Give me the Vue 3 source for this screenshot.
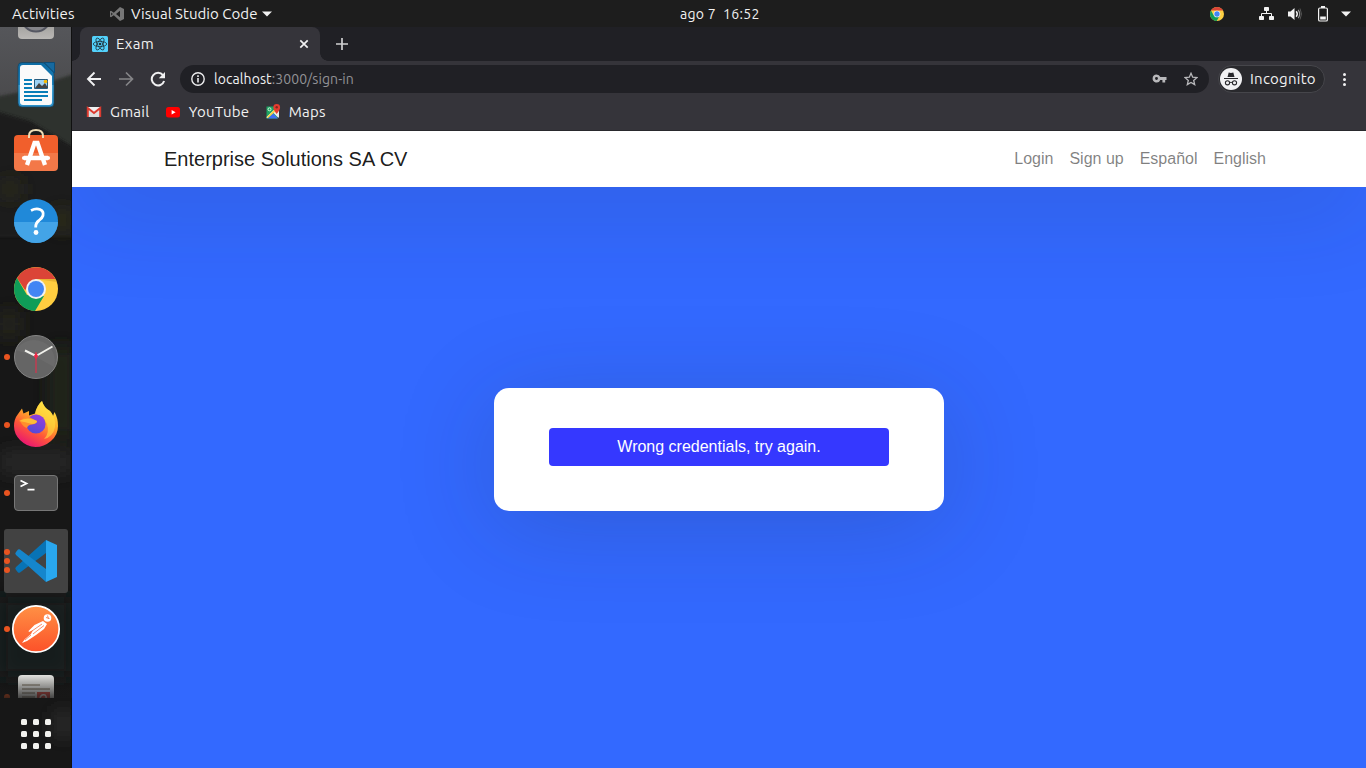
<script setup>
const bookmarks = ['Gmail', 'YouTube', 'Maps']
const links = ['Login', 'Sign up', 'Español', 'English']
const rays = [0, 60, 120]
</script>

<template>
  <div class="desktop">
    <header class="topbar">
      <div class="tb-left">
        <span class="activities">Activities</span>
        <svg class="vs-mini" width="16" height="16" viewBox="0 0 16 16"><path d="M11 1l4 2v10l-4 2-6.200-5.800L2 11.300 1 10.700V5.300l1-.6 2.800 2.100zM11 4.800L7 8l4 3.200zM2.200 6.400v3.200L3.800 8z" fill="#777" fill-rule="evenodd" /></svg>
        <span class="app-name">Visual Studio Code</span>
        <svg class="caret" width="10" height="6" viewBox="0 0 10 6"><path d="M0 .5h10L5 5.500z" fill="#f2f2f2" /></svg>
      </div>
      <span class="clock">ago 7&nbsp; 16:52</span>
      <div class="tray">
        <svg class="tray-chrome" width="14" height="14" viewBox="0 0 44 44"><circle cx="22" cy="22" r="22" fill="#fdd043" /><path d="M3 11A22 22 0 0 1 41 11H22z" fill="#db4437" /><path d="M3 11A22 22 0 0 0 21 44L31 27 12 27z" fill="#0f9d58" /><circle cx="22" cy="22" r="10.500" fill="#fff" /><circle cx="22" cy="22" r="8.500" fill="#4285f4" /></svg>
        <svg class="tray-net" width="16" height="14" viewBox="0 0 16 14" fill="#f2f2f2"><rect x="5" y="0" width="5" height="4" rx=".8" /><rect x="0" y="9" width="5" height="4" rx=".8" /><rect x="10" y="9" width="5" height="4" rx=".8" /><path d="M7.500 3v3.500M2.500 10V6.500h10V10" fill="none" stroke="#f2f2f2" /></svg>
        <svg class="tray-vol" width="16" height="14" viewBox="0 0 16 14"><path d="M1 4.500h2.500L7.500 1v12L3.500 9.500H1z" fill="#f2f2f2" /><path d="M9.200 4.300q2.200 2.700 0 5.400" fill="none" stroke="#f2f2f2" stroke-width="1.400" /><path d="M11.200 2.800q3 4.200 0 8.400" fill="none" stroke="#999" stroke-width="1.200" /><path d="M13 1.500q3 5.500 0 11" fill="none" stroke="#555" /></svg>
        <svg class="tray-bat" width="10" height="16" viewBox="0 0 10 16"><rect x=".6" y="2" width="8.800" height="13" rx="1.300" fill="none" stroke="#f2f2f2" stroke-width="1.200" /><rect x="3" y="0" width="4" height="2" fill="#f2f2f2" /><rect x="2.200" y="10.500" width="5.600" height="3" fill="#f2f2f2" /></svg>
        <svg width="10" height="6" viewBox="0 0 10 6"><path d="M0 .5h10L5 5.500z" fill="#f2f2f2" /></svg>
      </div>
    </header>

    <div class="workspace">
      <aside class="dock">
        <svg class="wall" width="72" height="741" viewBox="0 0 72 741" preserveAspectRatio="none">
          <defs>
            <linearGradient id="sky" x1="0" y1="0" x2="0" y2="1"><stop offset="0" stop-color="#55565a" /><stop offset="1" stop-color="#4a4a4c" /></linearGradient>
            <filter id="soft" x="-20%" y="-20%" width="140%" height="140%"><feGaussianBlur stdDeviation="1.500" /></filter>
            <filter id="haze" x="-50%" y="-50%" width="200%" height="200%"><feGaussianBlur stdDeviation="9" /></filter>
          </defs>
          <rect width="72" height="741" fill="#171717" />
          <rect width="72" height="75" fill="url(#sky)" />
          <path d="M-5 70L35 62 55 53 77 46V200H-5z" fill="#2f322e" filter="url(#soft)" />
          <path d="M-5 84L30 94 77 122V210H-5z" fill="#1a1a1a" filter="url(#soft)" />
          <g filter="url(#haze)"><rect x="0" y="155" width="20" height="14" fill="#30301d" /><rect x="52" y="184" width="20" height="18" fill="#32321b" /><rect x="0" y="285" width="18" height="24" fill="#292b1b" /><rect x="50" y="320" width="22" height="90" fill="#22251c" /><rect x="0" y="425" width="72" height="20" fill="#2b2b2b" /><rect x="0" y="570" width="72" height="80" fill="#191b1d" /><rect x="55" y="685" width="17" height="24" fill="#303032" /></g>
          <rect x="71" width="1" height="741" fill="#101010" />
        </svg>

        <div class="apps">
          <div class="app"><svg width="64" height="64"><defs><linearGradient id="metal" x1="0" y1="0" x2="0" y2="1"><stop offset="0" stop-color="#777" /><stop offset="1" stop-color="#bab8b5" /></linearGradient></defs><rect x="14" y="14" width="36" height="40" rx="4" fill="url(#metal)" /><circle cx="32" cy="32" r="14.500" fill="#85858a" stroke="#555762" stroke-width="2" /></svg></div>

          <div class="app"><svg width="64" height="64">
            <defs><linearGradient id="writer" x1="0" y1="0" x2="0" y2="1"><stop offset="0" stop-color="#0d6ba3" /><stop offset=".5" stop-color="#1b82bd" /><stop offset=".51" stop-color="#41a3d6" /><stop offset="1" stop-color="#2a8fc8" /></linearGradient></defs>
            <path d="M18 9.500h20q2 0 3.500 1.500l7 7Q50 19 50 21v29q0 4-4 4H18q-4 0-4-4V13.500q0-4 4-4z" fill="url(#writer)" stroke="#17405a" stroke-width=".7" />
            <path d="M19 12h18L48 23v26q0 3-3 3H19q-3 0-3-3V15q0-3 3-3z" fill="#fafafa" />
            <path d="M40 9.500h10.500V20z" fill="#16699f" stroke="#0d4d78" />
            <path d="M20 27h8M20 31h8M20 35h8M20 39h24M20 43h24M20 47h18" stroke="#087eb8" stroke-width="2" />
            <path d="M30.500 26.500h13v9h-13z" fill="#9dd2f4" stroke="#265c80" /><path d="M31 35l4-5 3 3 3-3 3 5z" fill="#444" /><circle cx="41.500" cy="28.500" r="1.800" fill="#f7b900" />
          </svg></div>

          <div class="app"><svg width="64" height="64">
            <path d="M14 14h36q4 0 4 4v15H10V18q0-4 4-4z" fill="#f15f2c" /><path d="M10 32h44v14q0 4-4 4H14q-4 0-4-4z" fill="#f37848" />
            <path d="M25 17v-2q0-6 7-6t7 6v2" fill="none" stroke="#efdcb5" stroke-width="2" />
            <path d="M23 44L30.500 22h3L41 44M20 37h24" fill="none" stroke="#fff" stroke-width="4.300" /><circle cx="20" cy="37" r="2.100" fill="#fff" /><circle cx="44" cy="37" r="2.100" fill="#fff" />
          </svg></div>

          <div class="app"><svg width="64" height="64">
            <circle cx="32" cy="32" r="22" fill="#2089d9" /><path d="M10 33a22 21 0 0 0 44 0z" fill="#43a4e7" />
            <path d="M27 21.500q5-2.500 9-1 4 1.800 3 6-.7 2.500-4 5-3.500 2.500-3.300 7" fill="none" stroke="#fff" stroke-width="2.800" /><circle cx="32" cy="43.500" r="2.400" fill="#fff" />
          </svg></div>

          <div class="app"><svg width="64" height="64">
            <circle cx="32" cy="32" r="22" fill="#ffcd40" /><path d="M13 21A22 22 0 0 1 51.500 22H32L21 33z" fill="#db4437" /><path d="M13 21A22 22 0 0 0 31 54L40 39 23 38z" fill="#0f9d58" /><path d="M32 22h19.500l1 3z" fill="#d9a32a" opacity=".6" /><circle cx="32" cy="32" r="10" fill="#f1f1f1" /><circle cx="32" cy="32" r="8" fill="#4285f4" />
          </svg></div>

          <div class="app"><i class="dot"></i><svg width="64" height="64">
            <circle cx="32" cy="32" r="21.500" fill="#656565" stroke="#858585" /><path d="M32 32L50 42A21 21 0 0 0 12 25z" fill="#6b6b6b" />
            <path d="M32 31L21 25.500M32 31l16.500-9.500" stroke="#f1f1ec" stroke-width="2" /><path d="M32 27v21" stroke="#ef2949" stroke-width="1" /><path d="M32 28l2.200 3-2.200 3.500-2.200-3.500z" fill="#ef2949" />
          </svg></div>

          <div class="app"><i class="dot"></i><svg width="64" height="64">
            <defs><linearGradient id="fox" x1=".8" y1="0" x2=".25" y2="1"><stop offset="0" stop-color="#fff04a" /><stop offset=".38" stop-color="#ffad28" /><stop offset=".65" stop-color="#ff5838" /><stop offset="1" stop-color="#e60e78" /></linearGradient><linearGradient id="globe" x1=".8" y1="0" x2=".3" y2="1"><stop offset="0" stop-color="#9a3ddd" /><stop offset="1" stop-color="#514bd6" /></linearGradient></defs>
            <path d="M14 21L18 15.500l1.500 5 5.500-2.500v4.500l6-2Q33 12 38 8q2 7 8 10 2 2 3 5l1.500-4Q54 25 54 33q0 9-7 15-7 6-15.500 6T16 47Q10 41 10 33q0-7 4-12z" fill="url(#fox)" />
            <path d="M31 20.500Q33 12 38 8q2 7 8 10 6 7 5 16-2 10-11 12 6-6 3-15-4-9-12-10.500z" fill="#ffe042" opacity=".6" />
            <circle cx="32" cy="31" r="9.600" fill="url(#globe)" />
            <path d="M16 28q3-4 9-4l8 4q0 2.500-5 3.500-4 0-5 3.500-4-1-7-7z" fill="#ff8f2d" />
            <path d="M15 28q9-5 18 0 0 2.500-5 3-7-2-13-3z" fill="#ffbd38" />
          </svg></div>

          <div class="app"><i class="dot"></i><svg width="64" height="64">
            <rect x="10.500" y="14.500" width="43" height="35" rx="3.500" fill="#4d4d4d" stroke="#777" /><path d="M16.500 19.500l6 3-6 3M23.500 28.700h7" fill="none" stroke="#fff" stroke-width="1.800" />
          </svg></div>

          <div class="app active"><div class="dots"><i></i><i></i><i></i></div><svg width="64" height="64">
            <path d="M12 41q-1.500-1.500 0-3L42 11v13L16 43.500q-1 .5-2 0z" fill="#0873b5" /><path d="M12 23q-1.500 1.500 0 3l30 27V40L16 20.500q-1-.5-2 0z" fill="#1586cc" /><path d="M42 11l11 5v32l-11 5z" fill="#29a7ee" />
          </svg></div>

          <div class="app"><i class="dot"></i><svg width="64" height="64">
            <defs><linearGradient id="post" x1="0" y1="0" x2="0" y2="1"><stop offset="0" stop-color="#ff9145" /><stop offset="1" stop-color="#fc5129" /></linearGradient></defs>
            <circle cx="32" cy="32" r="23.200" fill="url(#post)" stroke="#fff" stroke-width="1.700" />
            <circle cx="43.500" cy="21" r="3.800" fill="#fff" /><path d="M42 20.500l3.500 1M43.500 18.500l1 3.500" fill="none" stroke="#fa7440" stroke-width=".8" />
            <path d="M39 24l4 3-3 5-8 6-9 6-5 2 3-4 6-5 2-4-4 2-.5-1 6-6z" fill="#fff" /><path d="M38 27l-10 7M40 28.500L29 37M27 38l-6 5" stroke="#fa7044" stroke-width=".8" />
          </svg></div>

          <div class="app"><i class="dot"></i><svg width="64" height="64">
            <rect x="14" y="10" width="36" height="44" rx="4" fill="#e8e8e5" /><path d="M18 20h18M18 24h28M18 28h13M18 32h13" stroke="#999184" stroke-width="1.700" /><rect x="33" y="27" width="13" height="15" fill="#d94f48" /><path d="M36 33q1-4 5-3 3 3-1 4" fill="none" stroke="#eee" stroke-width="1.500" />
          </svg></div>
          <div class="fade"></div>
        </div>
        <div class="grid-btn"><i v-for="n in 9" :key="n"></i></div>
      </aside>

      <main class="browser">
        <div class="tabstrip">
          <div class="tab">
            <svg width="16" height="16" viewBox="0 0 16 16"><rect width="16" height="16" rx="1.500" fill="#53d1fb" /><g fill="none" stroke="#20343e" stroke-width=".8"><ellipse v-for="a in rays" :key="a" cx="8" cy="8" rx="6.700" ry="2.600" :transform="`rotate(${a} 8 8)`" /></g><circle cx="8" cy="8" r="1.300" fill="#20343e" /></svg>
            <span class="tab-title">Exam</span>
            <svg width="10" height="10" viewBox="0 0 10 10"><path d="M1.300 1.300l7.400 7.400M8.700 1.300L1.300 8.700" stroke="#f1f1f2" stroke-width="1.700" /></svg>
          </div>
          <svg class="plus" width="12" height="12" viewBox="0 0 12 12"><path d="M6 0v12M0 6h12" stroke="#cfcfd1" stroke-width="1.700" /></svg>
        </div>

        <div class="toolbar">
          <svg class="nav-i" width="16" height="16" viewBox="0 0 16 16"><path d="M15 8H2.500M8.500 1.500L2 8l6.500 6.500" fill="none" stroke="#f1f1f2" stroke-width="1.900" /></svg>
          <svg class="nav-i" width="16" height="16" viewBox="0 0 16 16"><path d="M1 8h13M8 1.500L14.500 8 8 14.500" fill="none" stroke="#858588" stroke-width="1.700" /></svg>
          <svg class="nav-i" width="16" height="16" viewBox="0 0 16 16"><path d="M13 4.200A6.300 6.300 0 1 0 14.100 10" fill="none" stroke="#f1f1f2" stroke-width="2" /><path d="M15 1v6.200H8.800z" fill="#f1f1f2" /></svg>
          <div class="omnibox">
            <svg width="14" height="14" viewBox="0 0 14 14"><circle cx="7" cy="7" r="6.200" fill="none" stroke="#ececee" stroke-width="1.400" /><path d="M7 6v4.500M7 3.300v1.600" stroke="#ececee" stroke-width="1.600" /></svg>
            <span class="url">localhost<span>:3000/sign-in</span></span>
            <svg class="key" width="15" height="10" viewBox="0 0 15 10"><path d="M4.500 .5a4 4 0 0 1 3.800 2.600H14.500v2.900h-1.300V8.500h-2.800V6H8.300a4 4 0 1 1-3.800-5.500zm0 2.600a1.400 1.400 0 1 0 0 2.900 1.400 1.400 0 0 0 0-2.900z" fill="#b8b8bb" fill-rule="evenodd" /></svg>
            <svg class="star" width="14" height="14" viewBox="0 0 14 14"><path d="M7 1.300l1.700 3.900 4.300.4-3.300 2.800 1 4.200L7 10.400l-3.700 2.200 1-4.200L1 5.600l4.300-.4z" fill="none" stroke="#b8b8bb" stroke-width="1.300" /></svg>
          </div>
          <div class="incognito">
            <svg width="22" height="22" viewBox="0 0 22 22"><circle cx="11" cy="11" r="11" fill="#f1f1f3" /><path d="M7.500 9l1.200-4.500q2.300.8 4.600 0L14.500 9zM4 10h14v1H4z" fill="#28282c" /><g fill="none" stroke="#28282c" stroke-width="1.100"><circle cx="7.500" cy="14.800" r="2.100" /><circle cx="14.500" cy="14.800" r="2.100" /><path d="M9.700 14.600q1.300-.8 2.600 0" /></g></svg>
            <span>Incognito</span>
          </div>
          <div class="kebab"><i></i><i></i><i></i></div>
        </div>

        <div class="bookmarks">
          <div v-for="b in bookmarks" :key="b" class="bookmark">
            <svg v-if="b === 'Gmail'" width="16" height="16" viewBox="0 0 16 16"><path d="M1 3h14v10H1z" fill="#f0f0f0" /><path d="M3 5l5 4 5-4v8H3z" fill="#dedede" /><path d="M1.800 13V4L8 9l6.200-5v9" fill="none" stroke="#dc3b30" stroke-width="2" /></svg>
            <svg v-else-if="b === 'YouTube'" width="16" height="16" viewBox="0 0 16 16"><rect x="1" y="3" width="14" height="10.500" rx="2.500" fill="#f00" /><path d="M6.600 6l4 2.200-4 2.300z" fill="#fff" /></svg>
            <svg v-else width="16" height="16" viewBox="0 0 16 16"><path d="M1.500 2.500h11v12h-11z" fill="#1da462" /><path d="M1.500 13L12 3l2 1v9.500h-1L8 8.500l-6 6z" fill="#e9e9e9" /><path d="M3 14.500l5-5.200 5 5.200z" fill="#3f6ff2" /><path d="M2 13L10 5l1.200 1.700L3 14z" fill="#fdd042" /><circle cx="4.500" cy="5.300" r="1.500" fill="none" stroke="#d7f4df" /><path d="M11.700 0a3.400 3.400 0 0 1 3.400 3.400q0 2-3.400 6.600-3.400-4.600-3.400-6.600A3.400 3.400 0 0 1 11.700 0z" fill="#e63c2f" /><circle cx="11.700" cy="3.300" r="1.200" fill="#80281f" /></svg>
            <span>{{ b }}</span>
          </div>
        </div>

        <div class="page">
          <nav class="navbar">
            <span class="brand">Enterprise Solutions SA CV</span>
            <div class="links"><a v-for="l in links" :key="l">{{ l }}</a></div>
          </nav>
          <section class="content">
            <div class="card"><div class="alert">Wrong credentials, try again.</div></div>
          </section>
        </div>
      </main>
    </div>
  </div>
</template>

<style>
html, body { margin: 0; overflow: hidden; }
</style>

<style scoped>
* { box-sizing: border-box; }
svg { display: block; flex: none; }
.desktop { width: 1366px; height: 768px; display: flex; flex-direction: column; overflow: hidden; font: 15px/20px Ubuntu, "Noto Sans", sans-serif; color: #f1f1f1; white-space: nowrap; }
.topbar { height: 27px; flex: none; background: #1d1d1d; display: grid; grid-template-columns: 607px 152px 1fr; align-items: center; }
.tb-left { display: flex; align-items: center; padding-left: 12px; }
.activities { width: 97px; letter-spacing: .1px; }
.vs-mini { margin-right: 6px; }
.app-name { width: 127px; letter-spacing: .04px; }
.caret { margin-left: 4px; }
.clock { width: 80px; font-size: 14px; letter-spacing: .3px; margin-left: 73px; }
.tray { display: flex; align-items: center; justify-content: flex-end; padding-right: 15px; }
.tray-chrome { margin-right: 35px; }
.tray-net { margin-right: 12px; }
.tray-vol { margin-right: 15px; }
.tray-bat { margin-right: 13px; }
.workspace { display: flex; height: 741px; }

.dock { width: 72px; flex: none; position: relative; background: #171717; overflow: hidden; }
.wall { position: absolute; inset: 0; }
.apps { position: relative; height: 671px; overflow: hidden; display: flex; flex-direction: column; gap: 4px; padding: 0 4px; }
.app { position: relative; width: 64px; height: 64px; flex: none; border-radius: 3px; }
.app:first-child { margin-top: -42px; }
.active { background: #424242; }
.dot, .dots i { width: 6px; height: 6px; border-radius: 50%; background: #e95420; }
.dot { position: absolute; left: 0; top: 29px; }
.dots { position: absolute; left: 0; top: 20px; display: flex; flex-direction: column; gap: 3px; }
.fade { position: absolute; left: 0; right: 0; bottom: 0; height: 24px; background: linear-gradient(rgba(23,23,23,0), rgba(23,23,23,.78)); }
.grid-btn { position: relative; width: 30px; margin: 21px auto 0; display: grid; grid-template-columns: repeat(3, 6px); gap: 6px; }
.grid-btn i { width: 6px; height: 6px; border-radius: 1.5px; background: #f1f1ee; }

.browser { flex: 1; display: flex; flex-direction: column; background: #35343a; }
.tabstrip { height: 34px; flex: none; background: #202025; display: flex; align-items: center; padding-left: 8px; }
.tab { position: relative; width: 240px; height: 34px; border-radius: 8px 8px 0 0; background: #35343a; display: flex; align-items: center; padding: 0 11px 0 12px; }
.tab::before, .tab::after { content: ""; position: absolute; bottom: 0; width: 8px; height: 8px; }
.tab::before { left: -8px; background: radial-gradient(circle at 0 0, #202025 7.5px, #35343a 8px); }
.tab::after { right: -8px; background: radial-gradient(circle at 100% 0, #202025 7.5px, #35343a 8px); }
.tab-title { flex: 1; margin-left: 8px; letter-spacing: .3px; }
.plus { margin-left: 16px; }
.toolbar { height: 36px; flex: none; display: flex; align-items: center; padding-left: 14px; }
.nav-i { margin-right: 16px; }
.omnibox { width: 1029px; height: 28px; margin-left: -2px; border-radius: 14px; background: #202025; display: flex; align-items: center; padding: 0 11px; }
.url { flex: 1; margin-left: 9px; font-size: 14px; letter-spacing: .08px; color: #f1f1f2; }
.url span { color: #929296; }
.key { margin-right: 17px; }
.incognito { width: 107px; height: 28px; margin-left: 9px; border: 1px solid #46464b; border-radius: 14px; background: #29292d; display: flex; align-items: center; padding-left: 1px; }
.incognito span { margin-left: 8px; letter-spacing: .25px; }
.kebab { margin-left: 18px; display: flex; flex-direction: column; gap: 2px; }
.kebab i { width: 3px; height: 3px; border-radius: 50%; background: #f1f1f2; }
.bookmarks { height: 34px; flex: none; display: flex; align-items: center; gap: 15.5px; padding: 0 0 4px 14px; border-bottom: 1px solid #29292d; }
.bookmark { display: flex; align-items: center; gap: 8px; letter-spacing: .22px; }

.page { flex: 1; display: flex; flex-direction: column; overflow: hidden; background: #3369ff; font: 16px/24px "Liberation Sans", Arial, sans-serif; }
.navbar { height: 56px; flex: none; background: #fff; padding: 0 92px; display: flex; align-items: center; justify-content: space-between; box-shadow: 0 15px 100px rgba(30,35,50,.19); }
.brand { font-size: 20px; line-height: 30px; color: rgba(0,0,0,.9); }
.links { display: flex; gap: 16px; margin-right: 8px; }
.links a { color: rgba(0,0,0,.5); }
.content { flex: 1; display: flex; justify-content: center; align-items: flex-start; padding-top: 201px; }
.card { width: 450px; height: 123px; border-radius: 15px; background: #fff; padding: 40px 55px; box-shadow: 0 15px 100px rgba(30,35,50,.19); }
.alert { height: 38px; border-radius: 4px; background: #3538ff; color: #fff; text-align: center; line-height: 38px; }
</style>
